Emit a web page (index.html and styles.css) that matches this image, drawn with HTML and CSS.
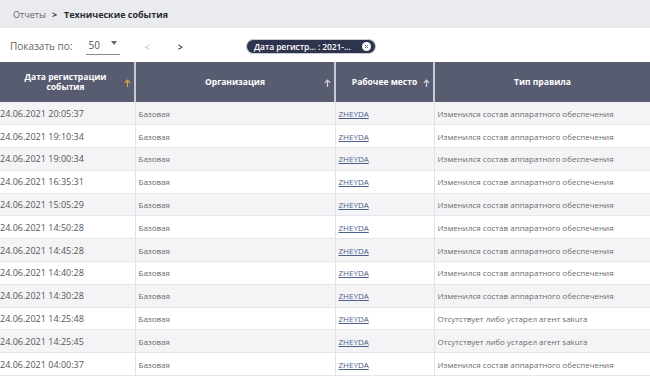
FILE: index.html
```html
<!DOCTYPE html>
<html lang="ru">
<head>
    <meta charset="UTF-8">
    <title>Технические события</title>
    <link rel="stylesheet" href="styles.css">
</head>
<body>
<div class="breadcrumbs">
    <span class="crumb">Отчеты</span>
    <span class="crumb-sep">&gt;</span>
    <span class="crumb current">Технические события</span>
</div>

<div class="toolbar">
    <span class="page-label">Показать по:</span>
    <div class="page-size">
        <span>50</span>
        <span class="caret"></span>
    </div>
    <span class="pager disabled">&lt;</span>
    <span class="pager">&gt;</span>
    <div class="chip">
        <span>Дата регистр... : 2021-...</span>
        <span class="chip-close">
            <svg width="9" height="9" viewBox="0 0 10 10"><circle cx="5" cy="5" r="5" fill="#fff"/><path d="M3.2 3.2 L6.8 6.8 M6.8 3.2 L3.2 6.8" stroke="#6a6e80" stroke-width="1.1"/></svg>
        </span>
    </div>
</div>

<div class="table-wrap">
    <table class="events">
        <colgroup>
            <col class="c-date"><col class="c-org"><col class="c-ws"><col class="c-type">
        </colgroup>
        <thead>
        <tr>
            <th><span class="th-title">Дата регистрации<br>события</span><svg class="sort active" width="7" height="8" viewBox="0 0 7 8"><path d="M3.5 8 V1.2 M0.8 3.8 L3.5 1 L6.2 3.8" fill="none" stroke="currentColor" stroke-width="1.2"/></svg></th>
            <th><span class="th-title">Организация</span><svg class="sort" width="7" height="8" viewBox="0 0 7 8"><path d="M3.5 8 V1.2 M0.8 3.8 L3.5 1 L6.2 3.8" fill="none" stroke="currentColor" stroke-width="1.2"/></svg></th>
            <th><span class="th-title">Рабочее место</span><svg class="sort" width="7" height="8" viewBox="0 0 7 8"><path d="M3.5 8 V1.2 M0.8 3.8 L3.5 1 L6.2 3.8" fill="none" stroke="currentColor" stroke-width="1.2"/></svg></th>
            <th><span class="th-title">Тип правила</span></th>
        </tr>
        </thead>
        <tbody id="rows"></tbody>
    </table>
</div>

<script>
    const rows = [
        ['24.06.2021 20:05:37', 'Изменился состав аппаратного обеспечения'],
        ['24.06.2021 19:10:34', 'Изменился состав аппаратного обеспечения'],
        ['24.06.2021 19:00:34', 'Изменился состав аппаратного обеспечения'],
        ['24.06.2021 16:35:31', 'Изменился состав аппаратного обеспечения'],
        ['24.06.2021 15:05:29', 'Изменился состав аппаратного обеспечения'],
        ['24.06.2021 14:50:28', 'Изменился состав аппаратного обеспечения'],
        ['24.06.2021 14:45:28', 'Изменился состав аппаратного обеспечения'],
        ['24.06.2021 14:40:28', 'Изменился состав аппаратного обеспечения'],
        ['24.06.2021 14:30:28', 'Изменился состав аппаратного обеспечения'],
        ['24.06.2021 14:25:48', 'Отсутствует либо устарел агент sakura'],
        ['24.06.2021 14:25:45', 'Отсутствует либо устарел агент sakura'],
        ['24.06.2021 04:00:37', 'Изменился состав аппаратного обеспечения']
    ];

    const tbody = document.getElementById("rows");
    rows.forEach(row => {
        const tr = document.createElement("tr");
        tr.innerHTML = `<td>${row[0]}</td><td>Базовая</td><td><a href="#">ZHEYDA</a></td><td>${row[1]}</td>`;
        tbody.appendChild(tr);
    });
</script>
</body>
</html>
```

FILE: styles.css
```css
* {
    box-sizing: border-box;
}
body {
    margin: 0;
    background: #fff;
    color: #555;
    font-family: 'Open Sans', sans-serif;
    overflow: hidden;
}
.breadcrumbs {
    display: flex;
    align-items: center;
    height: 28px;
    padding: 1px 0 0 13px;
    background-color: #e9ebee;
    font-size: 9px;
}
.crumb {
    color: #666;
}
.crumb-sep {
    margin: 0 7px 0 6px;
    color: #333;
    font-weight: 700;
}
.crumb.current {
    color: #2a2c35;
    font-weight: 700;
}
.toolbar {
    display: flex;
    align-items: center;
    height: 34px;
    padding: 2px 0 0 10px;
}
.page-label {
    font-size: 10px;
    color: #666;
}
.page-size {
    display: flex;
    align-items: center;
    width: 34px;
    margin-left: 14px;
    padding: 0 0 2px 2px;
    border-bottom: 1px solid #888;
    font-size: 10px;
    color: #555;
}
.caret {
    margin-left: 11px;
    border-left: 3px solid transparent;
    border-right: 3px solid transparent;
    border-top: 4px solid #666;
    margin-bottom: 4px;
}
.pager {
    margin-left: 26px;
    font-size: 11px;
    color: #222;
    transform: scaleX(0.8);
    font-weight: 600;
}
.pager.disabled {
    margin-left: 24px;
    color: #bbb;
    font-weight: 400;
}
.chip {
    display: flex;
    align-items: center;
    height: 15px;
    margin-left: 63px;
    padding: 0 4px 0 7px;
    background-color: #2f344e;
    border: 1px solid #c9ccd6;
    border-radius: 8px;
    color: #fff;
    font-size: 8.5px;
    font-weight: 600;
    letter-spacing: -0.1px;
}
.chip-close {
    display: flex;
    margin-left: 11px;
}
.table-wrap {
    margin-left: -3px;
}
table.events {
    width: 653px;
    border-collapse: collapse;
    table-layout: fixed;
    font-size: 8px;
}
col.c-date { width: 138px; }
col.c-org { width: 200px; }
col.c-ws { width: 99px; }
col.c-type { width: 216px; }
th {
    position: relative;
    height: 40px;
    padding: 0 12px;
    background-color: #585c70;
    border-left: 2px solid #c8cad3;
    color: #fff;
    font-size: 8.5px;
    font-weight: 700;
    line-height: 10px;
    text-align: center;
}
th:first-child {
    border-left: none;
}
.sort {
    position: absolute;
    right: 3px;
    top: 17px;
    color: #d4d6de;
}
.sort.active {
    color: #d6a44a;
}
td {
    height: 22.8px;
    padding: 0 3px;
    border-left: 1px solid #e1e2e6;
    border-bottom: 1px solid #e6e7ea;
    color: #6a6a6a;
    white-space: nowrap;
}
td:first-child {
    border-left: none;
    color: #555;
    font-size: 9px;
}
tbody tr:nth-child(odd) {
    background-color: #f4f4f6;
}
td a {
    color: #4d5d8c;
    text-decoration: underline;
}
```
